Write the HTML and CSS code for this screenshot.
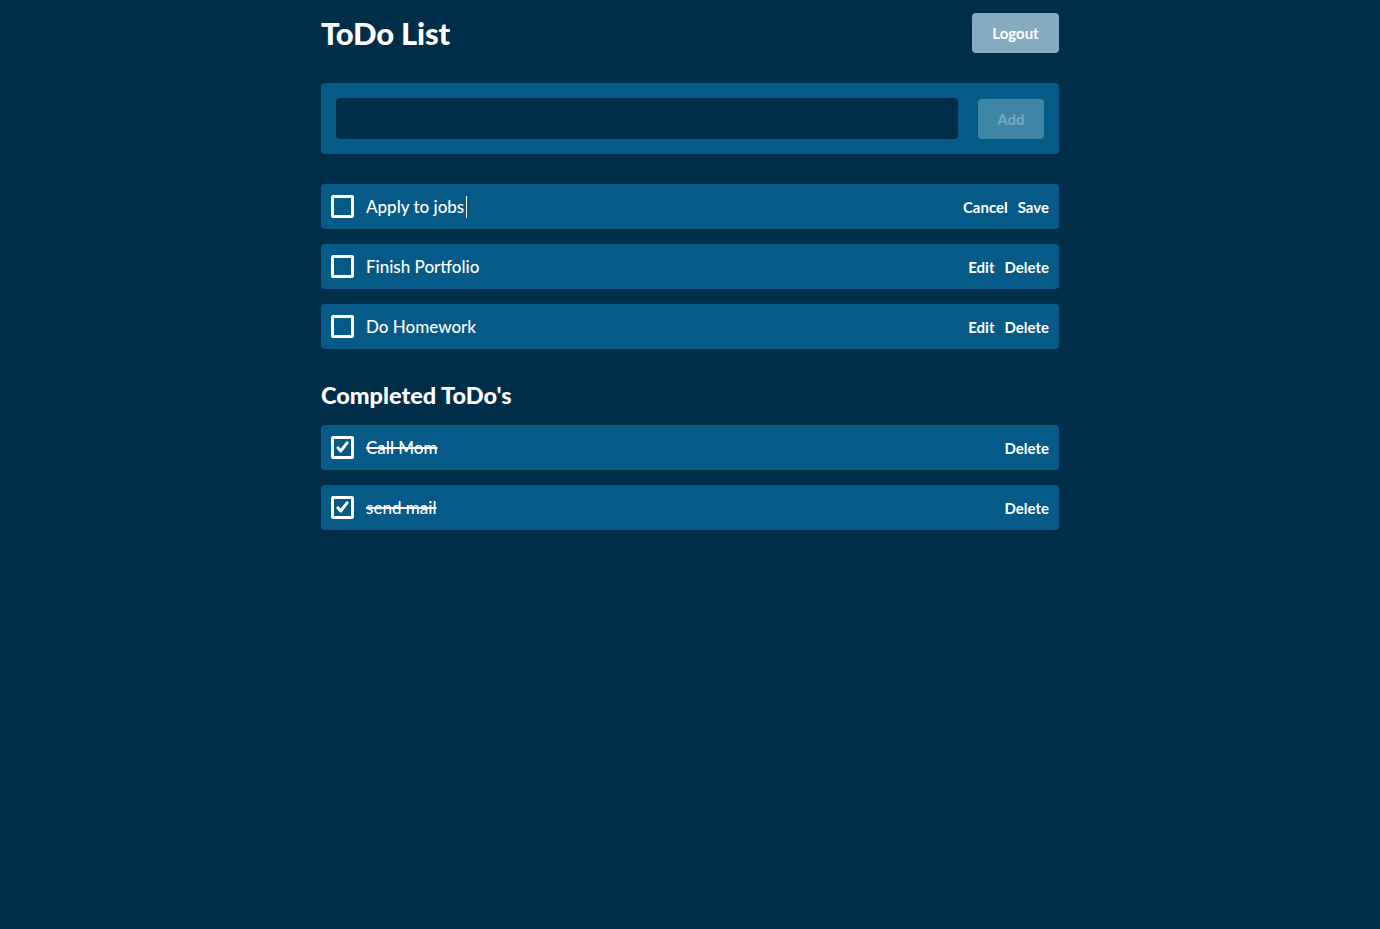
FILE: index.html
```html
<!DOCTYPE html>
<html>
<head>
<meta charset="utf-8">
<link rel="stylesheet" href="styles.css">
</head>
<body>
<div class="app">
  <header class="top">
    <h1 class="title">ToDo List</h1>
    <button class="logout">Logout</button>
  </header>
  <form class="add-form">
    <input class="add-input" type="text">
    <button class="add-btn" type="button">Add</button>
  </form>
  <ul class="list">
    <li class="item">
      <span class="check"></span>
      <span class="label">Apply to jobs<span class="caret"></span></span>
      <span class="actions"><span>Cancel</span><span>Save</span></span>
    </li>
    <li class="item">
      <span class="check"></span>
      <span class="label">Finish Portfolio</span>
      <span class="actions"><span>Edit</span><span>Delete</span></span>
    </li>
    <li class="item">
      <span class="check"></span>
      <span class="label">Do Homework</span>
      <span class="actions"><span>Edit</span><span>Delete</span></span>
    </li>
  </ul>
  <h2 class="subtitle">Completed ToDo's</h2>
  <ul class="list">
    <li class="item">
      <span class="check checked"><svg viewBox="0 0 24 24" width="17" height="17"><path d="M5.5 12.5l4 4.5L18.5 5.5" fill="none" stroke="#fff" stroke-width="4.2" stroke-linecap="round" stroke-linejoin="round"/></svg></span>
      <span class="label done">Call Mom</span>
      <span class="actions"><span>Delete</span></span>
    </li>
    <li class="item">
      <span class="check checked"><svg viewBox="0 0 24 24" width="17" height="17"><path d="M5.5 12.5l4 4.5L18.5 5.5" fill="none" stroke="#fff" stroke-width="4.2" stroke-linecap="round" stroke-linejoin="round"/></svg></span>
      <span class="label done">send mail</span>
      <span class="actions"><span>Delete</span></span>
    </li>
  </ul>
</div>
</body>
</html>
```
FILE: styles.css
```css
* { box-sizing: border-box; }
html, body { margin: 0; padding: 0; }
body {
  background: #002e48;
  color: #fff;
  font-family: "Lato", "Open Sans", sans-serif;
  min-height: 929px;
}
.app {
  width: 738px;
  margin: 0 auto;
  padding-top: 13px;
}
.top {
  display: flex;
  justify-content: space-between;
  align-items: flex-start;
  height: 70px;
}
.title {
  margin: 0;
  font-size: 31px;
  font-weight: 900;
  line-height: 40px;
  letter-spacing: -0.2px;
}
.logout {
  width: 87px;
  height: 40px;
  border: none;
  border-radius: 4px;
  background: #86abc0;
  color: #fff;
  font-family: inherit;
  font-size: 15px;
  font-weight: 700;
}
.add-form {
  display: flex;
  align-items: center;
  gap: 20px;
  background: #055a87;
  border-radius: 4px;
  padding: 15px 15px;
  height: 71px;
  margin: 0 0 30px;
}
.add-input {
  flex: 1;
  height: 41px;
  border: none;
  border-radius: 4px;
  background: #002e48;
  outline: none;
}
.add-btn {
  width: 66px;
  height: 40px;
  border: none;
  border-radius: 4px;
  background: #3f86a6;
  color: #76a8c2;
  font-family: inherit;
  font-size: 15px;
  font-weight: 700;
}
.list {
  list-style: none;
  margin: 0;
  padding: 0;
  display: flex;
  flex-direction: column;
  gap: 15px;
}
.item {
  display: flex;
  align-items: center;
  height: 45px;
  background: #055a87;
  border-radius: 4px;
  padding: 0 10px;
}
.check {
  width: 23px;
  height: 23px;
  border: 3px solid #fff;
  border-radius: 2px;
  display: flex;
  align-items: center;
  justify-content: center;
  flex: none;
}
.label {
  margin-left: 12px;
  font-size: 17px;
  font-weight: 500;
  flex: 1;
  display: flex;
  align-items: center;
}
.caret {
  display: inline-block;
  width: 1px;
  height: 22px;
  background: #fff;
  margin-left: 2px;
}
.done { text-decoration: line-through; text-decoration-thickness: 1.5px; }
.actions {
  display: flex;
  gap: 10px;
  font-size: 15px;
  font-weight: 700;
}
.subtitle {
  margin: 31px 0 15px;
  font-size: 23.5px;
  font-weight: 900;
  line-height: 30px;
}
```
